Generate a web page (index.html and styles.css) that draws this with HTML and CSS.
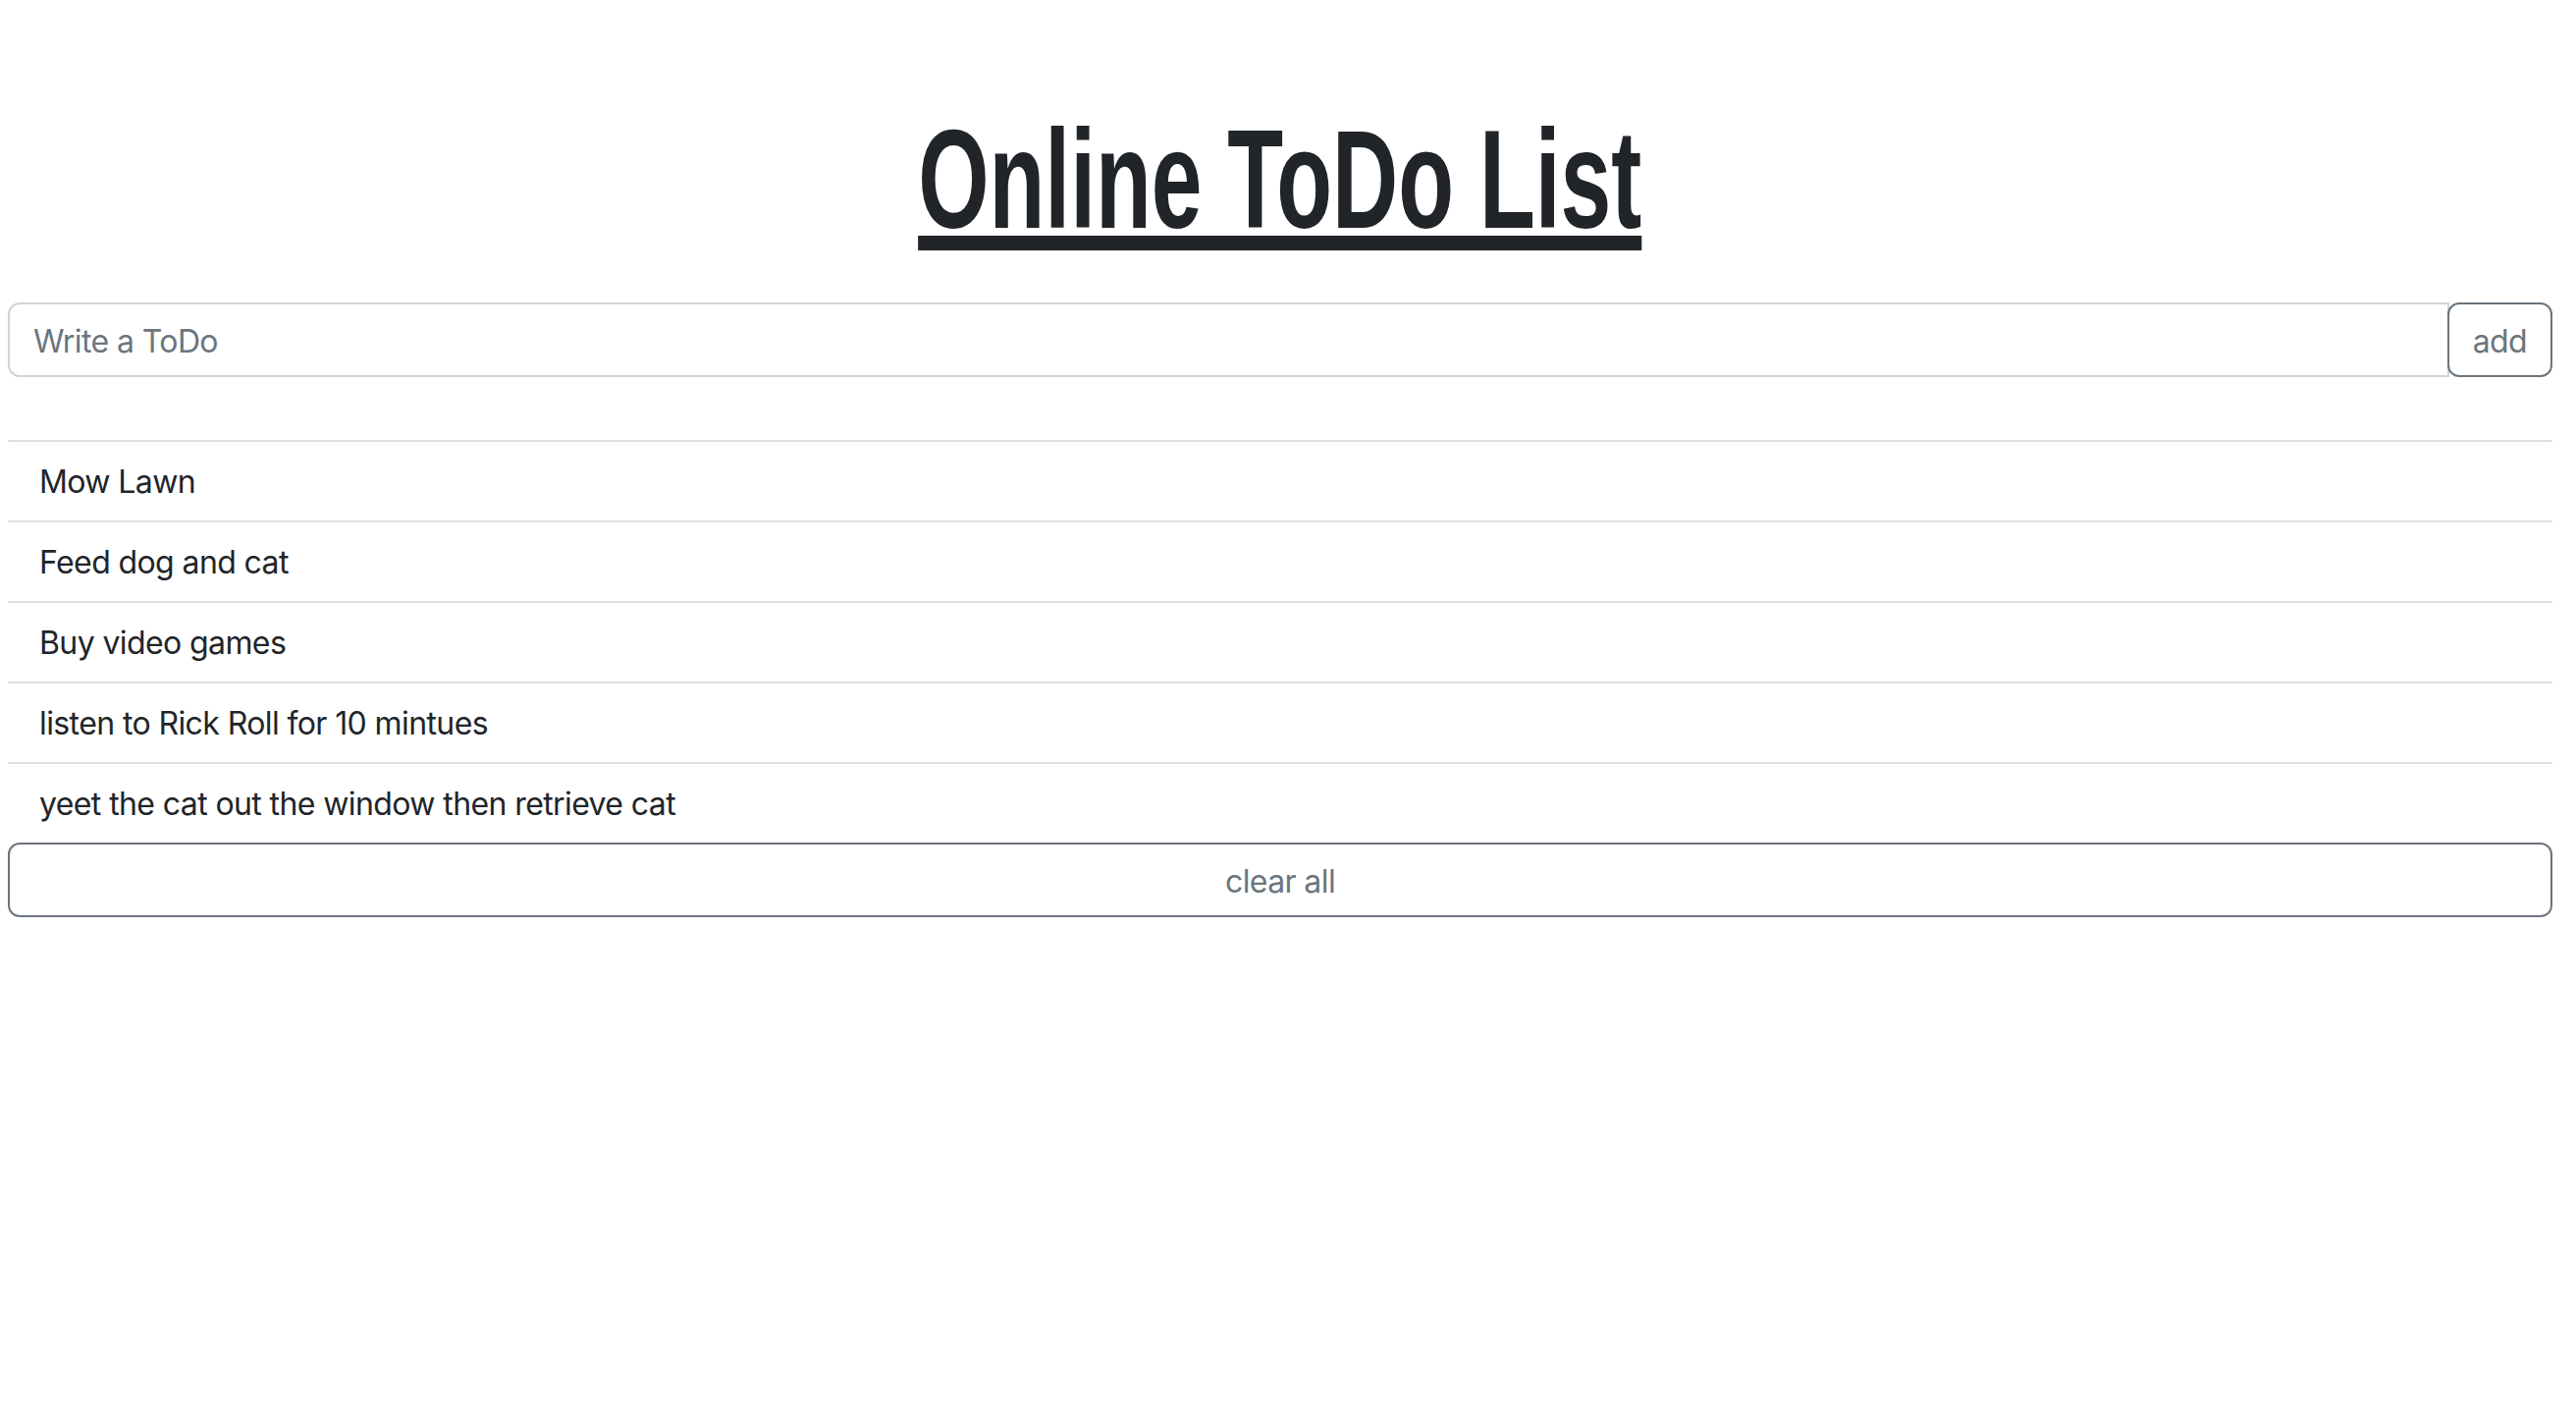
FILE: index.html
```html
<!DOCTYPE html>
<html lang="en">
<head>
<meta charset="utf-8">
<title>Online ToDo List</title>
<link rel="stylesheet" href="styles.css">
</head>
<body>
<main class="page">
  <h1 class="title"><span class="title-text">Online ToDo List</span></h1>
  <form class="entry">
    <input class="entry-input" type="text" placeholder="Write a ToDo">
    <button class="entry-add" type="button">add</button>
  </form>
  <ul class="todos">
    <li class="todo">Mow Lawn</li>
    <li class="todo">Feed dog and cat</li>
    <li class="todo">Buy video games</li>
    <li class="todo">listen to Rick Roll for 10 mintues</li>
    <li class="todo">yeet the cat out the window then retrieve cat</li>
  </ul>
  <button class="clear" type="button">clear all</button>
</main>
</body>
</html>
```

FILE: styles.css
```css
html, body {
  margin: 0;
  background: #fff;
}
body {
  font-family: Inter, "Liberation Sans", sans-serif;
  color: #212529;
  font-size: 32px;
  letter-spacing: -0.6px;
}
.page {
  padding: 0 24px 0 8px;
}
.title {
  margin: 113px 0 55px;
  text-align: center;
  font-family: "Liberation Sans", Arial, sans-serif;
  font-weight: 700;
  font-size: 142px;
  line-height: 140px;
  letter-spacing: 0;
  color: #212529;
}
.title-text {
  display: inline-block;
  transform: scaleX(0.655);
  transform-origin: 50% 50%;
  text-decoration: underline;
  text-decoration-thickness: 15px;
  text-underline-offset: 8px;
  white-space: nowrap;
}
.entry {
  display: flex;
  margin: 0 0 64px;
}
.entry-input {
  flex: 1;
  min-width: 0;
  height: 76px;
  box-sizing: border-box;
  border: 2px solid #ced4da;
  border-radius: 12px 0 0 12px;
  padding: 2px 24px 0;
  font: inherit;
  letter-spacing: inherit;
  color: #212529;
  outline: none;
}
.entry-input::placeholder {
  color: #6c757d;
}
.entry-add {
  height: 76px;
  box-sizing: border-box;
  margin-left: -2px;
  border: 2px solid #6c757d;
  border-radius: 12px;
  background: #fff;
  color: #6c757d;
  padding: 2px 24px 0;
  font: inherit;
  letter-spacing: inherit;
  position: relative;
}
.todos {
  list-style: none;
  margin: 0;
  padding: 0;
}
.todo {
  border-top: 2px solid #dfdfdf;
  padding: 17px 32px 15px;
  line-height: 48px;
}
.clear {
  display: block;
  width: 100%;
  height: 76px;
  box-sizing: border-box;
  border: 2px solid #6c757d;
  border-radius: 12px;
  background: #fff;
  color: #6c757d;
  font: inherit;
  letter-spacing: inherit;
  padding: 2px 24px 0;
}
```
